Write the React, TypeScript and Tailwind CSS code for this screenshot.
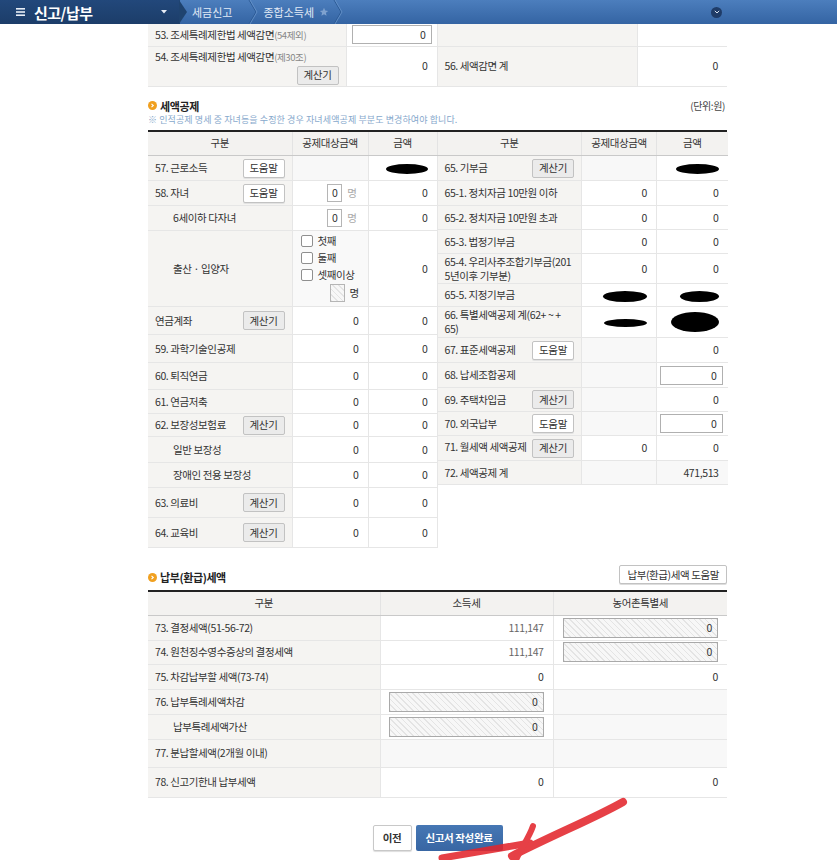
import React from 'react'

const cellB = 'border-b border-r border-[#e6e6e6]'
const labelTd = `${cellB} bg-[#f5f4f2] px-[7px] text-left align-middle`
const numTd = `${cellB} bg-white pr-[9px] text-right align-middle`
const grayTd = `${cellB} bg-[#f8f8f8]`
const hatch =
  'bg-[repeating-linear-gradient(45deg,#e4e4e4_0px,#e4e4e4_1px,#f7f7f7_1px,#f7f7f7_4px)]'

function Btn({ children, gray }: { children: React.ReactNode; gray?: boolean }) {
  return (
    <span
      className={
        'inline-flex h-[19px] w-[42px] shrink-0 items-center justify-center rounded-[2px] border border-[#c2c2c2] text-[#333] ' +
        (gray ? 'bg-[#ebebeb]' : 'bg-white shadow-[0_1px_0_#e2e2e2]')
      }
    >
      {children}
    </span>
  )
}

function Label({
  children,
  btn,
  indent,
}: {
  children: React.ReactNode
  btn?: '도움말' | '계산기'
  indent?: boolean
}) {
  return (
    <td className={labelTd + (indent ? ' pl-[25px]' : '')}>
      <div className="flex items-center justify-between gap-1">
        <span>{children}</span>
        {btn && <Btn gray={btn === '계산기'}>{btn}</Btn>}
      </div>
    </td>
  )
}

function Blob({ w, h }: { w: number; h: number }) {
  return (
    <span
      className="inline-block rounded-[50%] bg-black align-middle"
      style={{ width: w, height: h }}
    />
  )
}

function Count({ hatched }: { hatched?: boolean }) {
  return (
    <span className="inline-flex items-center gap-[5px]">
      <span
        className={
          'inline-block h-[18px] w-[15px] border border-[#b5b5b5] text-center leading-[16px] ' +
          (hatched ? hatch : 'bg-white')
        }
      >
        {hatched ? '' : '0'}
      </span>
      <span className={hatched ? 'text-[#333]' : 'text-[#aaa]'}>명</span>
    </span>
  )
}

function Check({ children }: { children: React.ReactNode }) {
  return (
    <div className="flex h-[17px] items-center gap-[5px]">
      <span className="inline-block h-[12px] w-[12px] rounded-[2px] border border-[#8f8f8f] bg-white" />
      <span>{children}</span>
    </div>
  )
}

function HatchInput({ w }: { w: number }) {
  return (
    <div
      className={`ml-auto h-[20px] border border-[#a9a9a9] pr-[5px] text-right leading-[18px] ${hatch}`}
      style={{ width: w }}
    >
      0
    </div>
  )
}

function SectionTitle({ children }: { children: React.ReactNode }) {
  return (
    <div className="flex items-center gap-[3px]">
      <span className="flex h-[9px] w-[9px] items-center justify-center rounded-full bg-[#f0a020]">
        <svg width="5" height="5" viewBox="0 0 5 5">
          <path d="M1.5 0.8 L3.3 2.5 L1.5 4.2" stroke="white" strokeWidth="1.1" fill="none" />
        </svg>
      </span>
      <span className="text-[11px] font-bold text-[#222]">{children}</span>
    </div>
  )
}

function Header() {
  return (
    <div className="flex h-6 items-center bg-gradient-to-b from-[#4c7ebd] to-[#3464a3] text-[11px] tracking-normal text-[#e3ebf6]">
      <div className="flex h-full w-[180px] items-center bg-gradient-to-b from-[#22487b] to-[#1c3d69] pl-4">
        <svg width="9" height="8" viewBox="0 0 9 8">
          <rect y="0" width="9" height="1.6" fill="#e8eef7" />
          <rect y="3.2" width="9" height="1.6" fill="#e8eef7" />
          <rect y="6.4" width="9" height="1.6" fill="#e8eef7" />
        </svg>
        <span className="ml-[9px] text-[15px] font-bold leading-none tracking-[-0.5px] text-white">신고/납부</span>
        <svg className="ml-auto mr-[13px]" width="6" height="4" viewBox="0 0 6 4">
          <path d="M0 0 H6 L3 3.5 Z" fill="#e8eef7" />
        </svg>
      </div>
      <svg width="9" height="24" viewBox="0 0 9 24" className="-ml-px">
        <path d="M0 0 L8 12 L0 24 Z" fill="#1f436f" />
      </svg>
      <span className="ml-[4px]">세금신고</span>
      <svg width="10" height="24" viewBox="0 0 10 24" className="ml-[16px]">
        <path d="M1 0 L8 12 L1 24" stroke="#2c5a95" strokeWidth="1" fill="none" />
        <path d="M2 0 L9 12 L2 24" stroke="#6a95cc" strokeWidth="0.8" fill="none" />
      </svg>
      <span className="ml-[5px]">종합소득세</span>
      <svg width="10" height="10" viewBox="0 0 24 24" className="ml-[5px]">
        <path
          d="M12 2 L14.9 8.6 L22 9.3 L16.6 14 L18.2 21 L12 17.3 L5.8 21 L7.4 14 L2 9.3 L9.1 8.6 Z"
          fill="#7fa2cf"
        />
      </svg>
      <svg width="10" height="24" viewBox="0 0 10 24" className="ml-[4px]">
        <path d="M1 0 L8 12 L1 24" stroke="#2c5a95" strokeWidth="1" fill="none" />
        <path d="M2 0 L9 12 L2 24" stroke="#6a95cc" strokeWidth="0.8" fill="none" />
      </svg>
      <span className="ml-auto mr-[115px] flex h-[11px] w-[11px] items-center justify-center rounded-full bg-[#1f3c68]">
        <svg width="6" height="4" viewBox="0 0 6 4">
          <path d="M0.8 0.8 L3 3 L5.2 0.8" stroke="#d8e2f0" strokeWidth="1" fill="none" />
        </svg>
      </span>
    </div>
  )
}

function TopTable() {
  return (
    <table className="w-[579px] table-fixed border-collapse">
      <colgroup>
        <col className="w-[198px]" />
        <col className="w-[91px]" />
        <col className="w-[200px]" />
        <col className="w-[90px]" />
      </colgroup>
      <tbody>
        <tr className="h-[22px]">
          <td className={labelTd}>
            53. 조세특례제한법 세액감면<span className="text-[9.5px] text-[#888]">(54제외)</span>
          </td>
          <td className={`${cellB} bg-white px-[5px]`}>
            <div className="h-[19px] border border-[#b0b0b0] pr-[5px] text-right leading-[17px]">0</div>
          </td>
          <td className={`${cellB} bg-[#f5f4f2]`} />
          <td className="border-b border-[#e6e6e6] bg-white" />
        </tr>
        <tr className="h-[40px]">
          <td className={`${labelTd} align-top pt-[3px]`}>
            <div>
              54. 조세특례제한법 세액감면<span className="text-[9.5px] text-[#888]">(제30조)</span>
            </div>
            <div className="mt-[2px] flex justify-end">
              <Btn gray>계산기</Btn>
            </div>
          </td>
          <td className={numTd}>0</td>
          <td className={labelTd}>56. 세액감면 계</td>
          <td className="border-b border-[#e6e6e6] bg-white pr-[9px] text-right">0</td>
        </tr>
      </tbody>
    </table>
  )
}

function LeftTable() {
  return (
    <table className="w-[289px] table-fixed border-collapse">
      <colgroup>
        <col className="w-[144px]" />
        <col className="w-[76px]" />
        <col className="w-[69px]" />
      </colgroup>
      <thead>
        <tr className="h-[24px] bg-[#f3f2f0]">
          <th className="border-b border-r border-b-[#c9c9c9] border-r-[#e3e3e3] font-normal">구분</th>
          <th className="border-b border-r border-b-[#c9c9c9] border-r-[#e3e3e3] font-normal">공제대상금액</th>
          <th className="border-b border-r border-b-[#c9c9c9] border-r-[#e3e3e3] font-normal">금액</th>
        </tr>
      </thead>
      <tbody>
        <tr className="h-[25px]">
          <Label btn="도움말">57. 근로소득</Label>
          <td className={grayTd} />
          <td className={numTd + ' pr-[4px]'}>
            <Blob w={42} h={10} />
          </td>
        </tr>
        <tr className="h-[25px]">
          <Label btn="도움말">58. 자녀</Label>
          <td className={numTd + ' pr-[11px]'}>
            <Count />
          </td>
          <td className={numTd}>0</td>
        </tr>
        <tr className="h-[25px]">
          <Label indent>6세이하 다자녀</Label>
          <td className={numTd + ' pr-[11px]'}>
            <Count />
          </td>
          <td className={numTd}>0</td>
        </tr>
        <tr className="h-[76px]">
          <Label indent>출산 · 입양자</Label>
          <td className={`${cellB} bg-[#f9f9f9] pl-[8px] align-middle`}>
            <Check>첫째</Check>
            <Check>둘째</Check>
            <Check>셋째이상</Check>
            <div className="pl-[29px]">
              <Count hatched />
            </div>
          </td>
          <td className={numTd}>0</td>
        </tr>
        <tr className="h-[28px]">
          <Label btn="계산기">연금계좌</Label>
          <td className={numTd}>0</td>
          <td className={numTd}>0</td>
        </tr>
        <tr className="h-[28px]">
          <Label>59. 과학기술인공제</Label>
          <td className={numTd}>0</td>
          <td className={numTd}>0</td>
        </tr>
        <tr className="h-[27px]">
          <Label>60. 퇴직연금</Label>
          <td className={numTd}>0</td>
          <td className={numTd}>0</td>
        </tr>
        <tr className="h-[24px]">
          <Label>61. 연금저축</Label>
          <td className={numTd}>0</td>
          <td className={numTd}>0</td>
        </tr>
        <tr className="h-[23px]">
          <Label btn="계산기">62. 보장성보험료</Label>
          <td className={numTd}>0</td>
          <td className={numTd}>0</td>
        </tr>
        <tr className="h-[26px]">
          <Label indent>일반 보장성</Label>
          <td className={numTd}>0</td>
          <td className={numTd}>0</td>
        </tr>
        <tr className="h-[25px]">
          <Label indent>장애인 전용 보장성</Label>
          <td className={numTd}>0</td>
          <td className={numTd}>0</td>
        </tr>
        <tr className="h-[30px]">
          <Label btn="계산기">63. 의료비</Label>
          <td className={numTd}>0</td>
          <td className={numTd}>0</td>
        </tr>
        <tr className="h-[30px]">
          <Label btn="계산기">64. 교육비</Label>
          <td className={numTd}>0</td>
          <td className={numTd}>0</td>
        </tr>
      </tbody>
    </table>
  )
}

function RightTable() {
  const numR = 'border-b border-[#e6e6e6] bg-white pr-[9px] text-right align-middle'
  const grayR = 'border-b border-[#e6e6e6] bg-[#f8f8f8] pr-[9px] text-right align-middle'
  return (
    <table className="w-[290px] table-fixed border-collapse">
      <colgroup>
        <col className="w-[144px]" />
        <col className="w-[75px]" />
        <col className="w-[71px]" />
      </colgroup>
      <thead>
        <tr className="h-[24px] bg-[#f3f2f0]">
          <th className="border-b border-r border-b-[#c9c9c9] border-r-[#e3e3e3] font-normal">구분</th>
          <th className="border-b border-r border-b-[#c9c9c9] border-r-[#e3e3e3] font-normal">공제대상금액</th>
          <th className="border-b border-b-[#c9c9c9] font-normal">금액</th>
        </tr>
      </thead>
      <tbody>
        <tr className="h-[25px]">
          <Label btn="계산기">65. 기부금</Label>
          <td className={grayTd} />
          <td className={numR + ' pr-[4px]'}>
            <Blob w={43} h={10} />
          </td>
        </tr>
        <tr className="h-[25px]">
          <Label>65-1. 정치자금 10만원 이하</Label>
          <td className={numTd}>0</td>
          <td className={numR}>0</td>
        </tr>
        <tr className="h-[24px]">
          <Label>65-2. 정치자금 10만원 초과</Label>
          <td className={numTd}>0</td>
          <td className={numR}>0</td>
        </tr>
        <tr className="h-[24px]">
          <Label>65-3. 법정기부금</Label>
          <td className={numTd}>0</td>
          <td className={numR}>0</td>
        </tr>
        <tr className="h-[30px]">
          <td className={labelTd + ' whitespace-nowrap'}>
            65-4. 우리사주조합기부금(201
            <br />
            5년이후 기부분)
          </td>
          <td className={numTd}>0</td>
          <td className={numR}>0</td>
        </tr>
        <tr className="h-[23px]">
          <Label>65-5. 지정기부금</Label>
          <td className={numTd + ' pr-[6px]'}>
            <Blob w={44} h={11} />
          </td>
          <td className={numR + ' pr-[5px]'}>
            <Blob w={39} h={11} />
          </td>
        </tr>
        <tr className="h-[31px]">
          <td className={labelTd + ' whitespace-nowrap'}>
            66. 특별세액공제 계(62+ ~ +
            <br />
            65)
          </td>
          <td className={numTd + ' pr-[9px]'}>
            <Blob w={43} h={8} />
          </td>
          <td className={numR + ' pr-[2px]'}>
            <Blob w={48} h={20} />
          </td>
        </tr>
        <tr className="h-[25px]">
          <Label btn="도움말">67. 표준세액공제</Label>
          <td className={grayTd} />
          <td className={numR}>0</td>
        </tr>
        <tr className="h-[25px]">
          <Label>68. 납세조합공제</Label>
          <td className={grayTd} />
          <td className="border-b border-[#e6e6e6] bg-white pl-[3px] pr-[5px]">
            <div className="h-[19px] border border-[#b0b0b0] pr-[5px] text-right leading-[17px]">0</div>
          </td>
        </tr>
        <tr className="h-[24px]">
          <Label btn="계산기">69. 주택차입금</Label>
          <td className={grayTd} />
          <td className={numR}>0</td>
        </tr>
        <tr className="h-[24px]">
          <Label btn="도움말">70. 외국납부</Label>
          <td className={grayTd} />
          <td className="border-b border-[#e6e6e6] bg-white pl-[3px] pr-[5px]">
            <div className="h-[19px] border border-[#b0b0b0] pr-[5px] text-right leading-[17px]">0</div>
          </td>
        </tr>
        <tr className="h-[25px]">
          <td className={labelTd}>
            <div className="flex items-start justify-between">
              <span className="mt-[1px] whitespace-nowrap">71. 월세액 세액공제</span>
              <Btn gray>계산기</Btn>
            </div>
          </td>
          <td className={numTd}>0</td>
          <td className={numR}>0</td>
        </tr>
        <tr className="h-[24px]">
          <Label>72. 세액공제 계</Label>
          <td className={grayTd} />
          <td className={grayR}>471,513</td>
        </tr>
      </tbody>
    </table>
  )
}

function PayTable() {
  const th = 'border-b border-r border-b-[#c9c9c9] border-r-[#e3e3e3] font-normal'
  const numR = 'border-b border-[#e6e6e6] bg-white pr-[9px] text-right align-middle'
  return (
    <table className="w-[579px] table-fixed border-collapse">
      <colgroup>
        <col className="w-[232px]" />
        <col className="w-[173px]" />
        <col className="w-[174px]" />
      </colgroup>
      <thead>
        <tr className="h-[23px] bg-[#f3f2f0]">
          <th className={th}>구분</th>
          <th className={th}>소득세</th>
          <th className="border-b border-b-[#c9c9c9] font-normal">농어촌특별세</th>
        </tr>
      </thead>
      <tbody>
        <tr className="h-[25px]">
          <Label>73. 결정세액(51-56-72)</Label>
          <td className={numTd + ' text-[#666]'}>111,147</td>
          <td className={numR}>
            <HatchInput w={155} />
          </td>
        </tr>
        <tr className="h-[24px]">
          <Label>74. 원천징수영수증상의 결정세액</Label>
          <td className={numTd + ' text-[#666]'}>111,147</td>
          <td className={numR}>
            <HatchInput w={155} />
          </td>
        </tr>
        <tr className="h-[25px]">
          <Label>75. 차감납부할 세액(73-74)</Label>
          <td className={numTd}>0</td>
          <td className={numR}>0</td>
        </tr>
        <tr className="h-[25px]">
          <Label>76. 납부특례세액차감</Label>
          <td className={numTd}>
            <HatchInput w={155} />
          </td>
          <td className="border-b border-[#e6e6e6] bg-[#f8f8f8]" />
        </tr>
        <tr className="h-[25px]">
          <Label indent>납부특례세액가산</Label>
          <td className={numTd}>
            <HatchInput w={155} />
          </td>
          <td className="border-b border-[#e6e6e6] bg-[#f8f8f8]" />
        </tr>
        <tr className="h-[28px]">
          <Label>77. 분납할세액(2개월 이내)</Label>
          <td className={grayTd} />
          <td className="border-b border-[#e6e6e6] bg-[#f8f8f8]" />
        </tr>
        <tr className="h-[30px]">
          <Label>78. 신고기한내 납부세액</Label>
          <td className={numTd}>0</td>
          <td className={numR}>0</td>
        </tr>
      </tbody>
    </table>
  )
}

export default function App() {
  return (
    <div className="relative h-[860px] w-[837px] overflow-hidden bg-white font-['Noto_Sans_CJK_KR',sans-serif] text-[10.5px] leading-[14px] tracking-[-0.4px] text-[#333]">
      <Header />
      <div className="ml-[148px] w-[579px]">
        <TopTable />

        <div className="mt-[11px] flex h-[16px] items-center justify-between">
          <SectionTitle>세액공제</SectionTitle>
          <span className="pr-[2px] text-[10px] text-[#444]">(단위:원)</span>
        </div>
        <p className="h-[12px] text-[9px] leading-[12px] tracking-[0.1px] text-[#86a8cc]">
          ※ 인적공제 명세 중 자녀등을 수정한 경우 자녀세액공제 부분도 변경하여야 합니다.
        </p>
        <div className="mt-[4px] flex items-start border-t-2 border-[#222]">
          <LeftTable />
          <RightTable />
        </div>

        <div className="mt-[17px] flex h-[20px] items-end justify-between pb-[1px]">
          <SectionTitle>납부(환급)세액</SectionTitle>
          <span className="inline-flex h-[19px] items-center rounded-[2px] border border-[#c2c2c2] bg-white px-[7px] shadow-[0_1px_0_#ddd]">
            납부(환급)세액 도움말
          </span>
        </div>
        <div className="mt-[5px] border-t-2 border-[#222]">
          <PayTable />
        </div>

        <div className="mt-[27px] flex justify-center gap-[4px]">
          <span className="inline-flex h-[26px] w-[39px] items-center justify-center rounded-[2px] border border-[#c8c8c8] bg-white font-bold shadow-[0_1px_1px_#ddd]">
            이전
          </span>
          <span className="inline-flex h-[26px] w-[87px] items-center justify-center rounded-[2px] bg-gradient-to-b from-[#4677b4] to-[#3866a3] font-bold text-white">
            신고서 작성완료
          </span>
        </div>
      </div>

      <svg
        className="pointer-events-none absolute left-[420px] top-[790px]"
        width="220"
        height="72"
        viewBox="0 0 220 72"
      >
        <g stroke="#e3262d" strokeLinecap="round" fill="none" opacity="0.88">
          <path d="M203 12 C175 28 135 44 92 66" strokeWidth="8" />
          <path d="M22 68 C50 63 80 58 110 53" strokeWidth="7" />
          <path d="M113 36 C109 48 101 58 96 70" strokeWidth="6" />
        </g>
      </svg>
    </div>
  )
}
